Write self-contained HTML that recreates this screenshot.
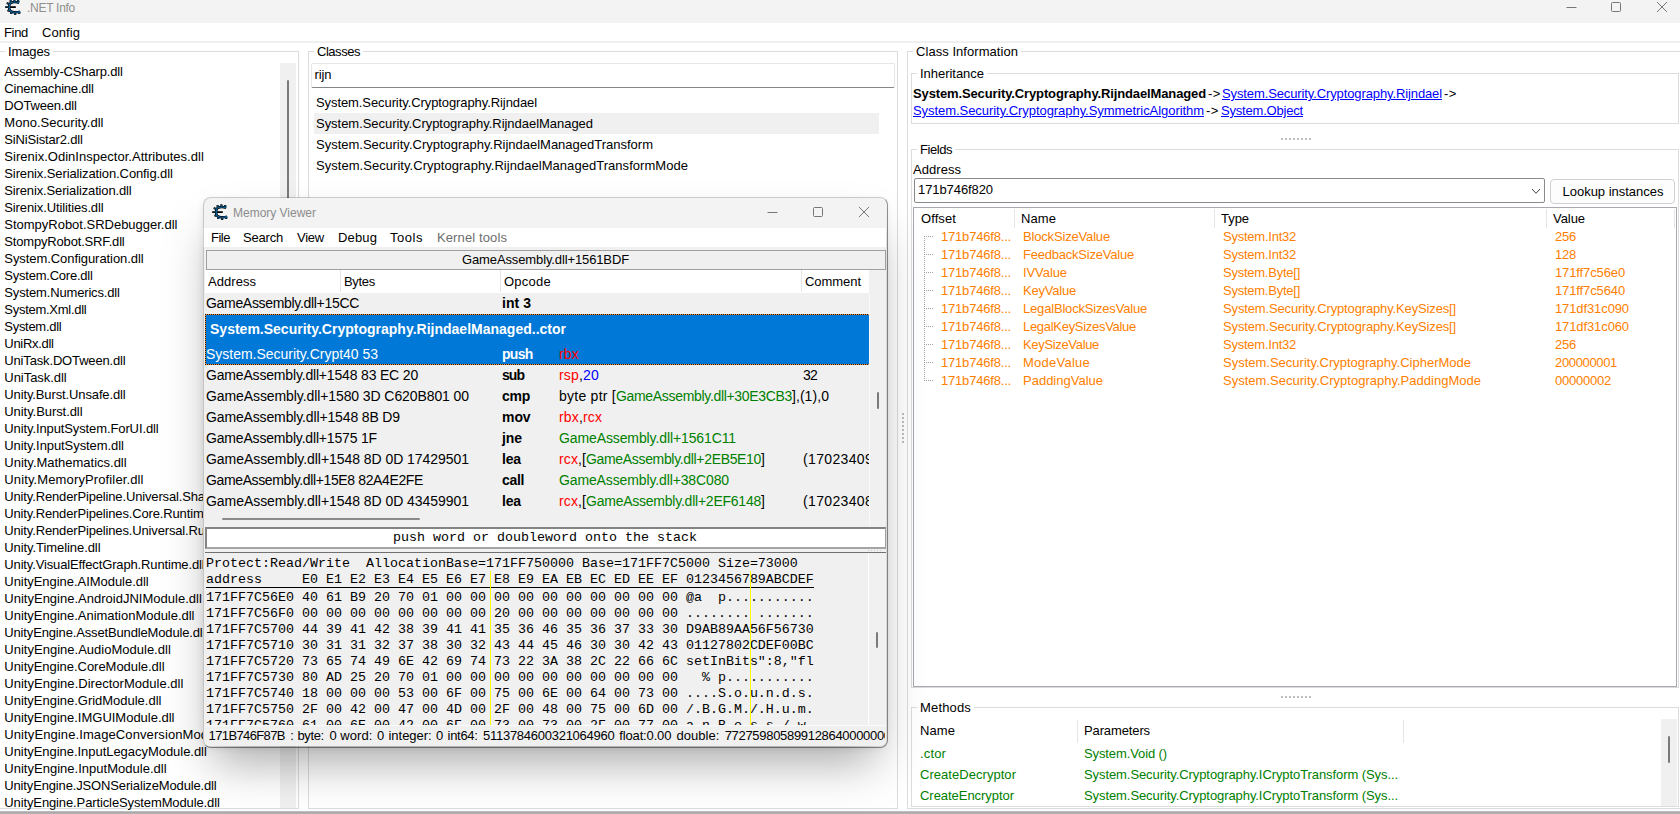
<!DOCTYPE html><html><head><meta charset="utf-8"><title>.NET Info</title><style>
html,body{margin:0;padding:0;background:#fff;}
body{width:1680px;height:814px;overflow:hidden;position:relative;font-family:"Liberation Sans", sans-serif;}
#main,#mv{position:absolute;}
#main{left:0;top:0;width:1680px;height:814px;overflow:hidden;}
#main>*,#mv>*,#mv>div>*{position:absolute;}
.t{white-space:pre;display:block;}
#mv{left:203px;top:198px;width:683px;height:548px;border-radius:8px 8px 6px 6px;overflow:hidden;background:#f0f0f0;}
#mvring{position:absolute;left:203px;top:197px;width:684.5px;height:551px;border-radius:8px;box-sizing:border-box;border:1px solid;border-color:rgba(0,0,0,.18) rgba(0,0,0,.42) rgba(0,0,0,.42) rgba(0,0,0,.18);}
#mvsh{position:absolute;left:203px;top:198px;width:683px;height:548px;border-radius:8px;box-shadow:0 26px 44px -10px rgba(0,0,0,.34),0 2px 7px rgba(0,0,0,.09);}
</style></head><body><div id="main"><div style="left:0px;top:0px;width:1680px;height:23px;background:#f3f3f3"></div><span class="t" style="letter-spacing:-0.274px;left:27px;top:-1.0px;line-height:18px;font-size:12px;color:#8f8f8f;">.NET Info</span><svg style="left:1560px;top:0" width="120" height="22" viewBox="0 0 120 22"><g fill="none" stroke="#777" stroke-width="1"><path d="M6.5 7.5h10"/><rect x="51.5" y="2.5" width="9" height="9" rx="1"/><path d="M97 2l10 10M107 2l-10 10"/></g></svg><span class="t" style="letter-spacing:-0.324px;left:4px;top:23.0px;line-height:19px;font-size:13px;color:#000;">Find</span><span class="t" style="letter-spacing:0.070px;left:42px;top:23.0px;line-height:19px;font-size:13px;color:#000;">Config</span><div style="left:0px;top:41px;width:1680px;height:2px;background:#f0f0f0"></div><div style="left:0px;top:51px;width:299px;height:758px;border:1px solid #dcdcdc;border-left:none;box-sizing:border-box"></div><span class="t" style="letter-spacing:-0.107px;left:5px;top:45.0px;line-height:13px;font-size:13px;color:#000;background:#fff;padding:0 3px;">Images</span><div style="left:280px;top:63px;width:16px;height:745px;background:#f0f0f0"></div><div style="left:287px;top:80px;width:2px;height:130px;background:#7a7a7a;border-radius:1px"></div><span class="t" style="letter-spacing:-0.151px;left:4.3px;top:61.5px;line-height:19px;font-size:13px;color:#000;">Assembly-CSharp.dll</span><span class="t" style="letter-spacing:-0.207px;left:4.3px;top:78.5px;line-height:19px;font-size:13px;color:#000;">Cinemachine.dll</span><span class="t" style="letter-spacing:-0.184px;left:4.3px;top:95.5px;line-height:19px;font-size:13px;color:#000;">DOTween.dll</span><span class="t" style="letter-spacing:0.026px;left:4.3px;top:112.5px;line-height:19px;font-size:13px;color:#000;">Mono.Security.dll</span><span class="t" style="letter-spacing:-0.168px;left:4.3px;top:129.5px;line-height:19px;font-size:13px;color:#000;">SiNiSistar2.dll</span><span class="t" style="letter-spacing:0.022px;left:4.3px;top:146.5px;line-height:19px;font-size:13px;color:#000;">Sirenix.OdinInspector.Attributes.dll</span><span class="t" style="letter-spacing:-0.112px;left:4.3px;top:163.5px;line-height:19px;font-size:13px;color:#000;">Sirenix.Serialization.Config.dll</span><span class="t" style="letter-spacing:-0.139px;left:4.3px;top:180.5px;line-height:19px;font-size:13px;color:#000;">Sirenix.Serialization.dll</span><span class="t" style="letter-spacing:-0.127px;left:4.3px;top:197.5px;line-height:19px;font-size:13px;color:#000;">Sirenix.Utilities.dll</span><span class="t" style="letter-spacing:-0.013px;left:4.3px;top:214.5px;line-height:19px;font-size:13px;color:#000;">StompyRobot.SRDebugger.dll</span><span class="t" style="letter-spacing:-0.172px;left:4.3px;top:231.5px;line-height:19px;font-size:13px;color:#000;">StompyRobot.SRF.dll</span><span class="t" style="letter-spacing:-0.067px;left:4.3px;top:248.5px;line-height:19px;font-size:13px;color:#000;">System.Configuration.dll</span><span class="t" style="letter-spacing:-0.223px;left:4.3px;top:265.5px;line-height:19px;font-size:13px;color:#000;">System.Core.dll</span><span class="t" style="letter-spacing:-0.156px;left:4.3px;top:282.5px;line-height:19px;font-size:13px;color:#000;">System.Numerics.dll</span><span class="t" style="letter-spacing:-0.269px;left:4.3px;top:299.5px;line-height:19px;font-size:13px;color:#000;">System.Xml.dll</span><span class="t" style="letter-spacing:-0.287px;left:4.3px;top:316.5px;line-height:19px;font-size:13px;color:#000;">System.dll</span><span class="t" style="letter-spacing:-0.302px;left:4.3px;top:333.5px;line-height:19px;font-size:13px;color:#000;">UniRx.dll</span><span class="t" style="letter-spacing:-0.157px;left:4.3px;top:350.5px;line-height:19px;font-size:13px;color:#000;">UniTask.DOTween.dll</span><span class="t" style="letter-spacing:-0.042px;left:4.3px;top:367.5px;line-height:19px;font-size:13px;color:#000;">UniTask.dll</span><span class="t" style="letter-spacing:-0.124px;left:4.3px;top:384.5px;line-height:19px;font-size:13px;color:#000;">Unity.Burst.Unsafe.dll</span><span class="t" style="letter-spacing:-0.069px;left:4.3px;top:401.5px;line-height:19px;font-size:13px;color:#000;">Unity.Burst.dll</span><span class="t" style="letter-spacing:-0.110px;left:4.3px;top:418.5px;line-height:19px;font-size:13px;color:#000;">Unity.InputSystem.ForUI.dll</span><span class="t" style="letter-spacing:-0.078px;left:4.3px;top:435.5px;line-height:19px;font-size:13px;color:#000;">Unity.InputSystem.dll</span><span class="t" style="letter-spacing:-0.013px;left:4.3px;top:452.5px;line-height:19px;font-size:13px;color:#000;">Unity.Mathematics.dll</span><span class="t" style="letter-spacing:0.125px;left:4.3px;top:469.5px;line-height:19px;font-size:13px;color:#000;">Unity.MemoryProfiler.dll</span><span class="t" style="left:4.3px;top:486.5px;line-height:19px;font-size:13px;color:#000;letter-spacing:-0.15px;">Unity.RenderPipeline.Universal.ShaderLibrary.dll</span><span class="t" style="left:4.3px;top:503.5px;line-height:19px;font-size:13px;color:#000;letter-spacing:-0.15px;">Unity.RenderPipelines.Core.Runtime.dll</span><span class="t" style="left:4.3px;top:520.5px;line-height:19px;font-size:13px;color:#000;letter-spacing:-0.15px;">Unity.RenderPipelines.Universal.Runtime.dll</span><span class="t" style="letter-spacing:-0.074px;left:4.3px;top:537.5px;line-height:19px;font-size:13px;color:#000;">Unity.Timeline.dll</span><span class="t" style="letter-spacing:-0.143px;left:4.3px;top:554.5px;line-height:19px;font-size:13px;color:#000;">Unity.VisualEffectGraph.Runtime.dll</span><span class="t" style="letter-spacing:-0.040px;left:4.3px;top:571.5px;line-height:19px;font-size:13px;color:#000;">UnityEngine.AIModule.dll</span><span class="t" style="letter-spacing:0.007px;left:4.3px;top:588.5px;line-height:19px;font-size:13px;color:#000;">UnityEngine.AndroidJNIModule.dll</span><span class="t" style="letter-spacing:-0.019px;left:4.3px;top:605.5px;line-height:19px;font-size:13px;color:#000;">UnityEngine.AnimationModule.dll</span><span class="t" style="left:4.3px;top:622.5px;line-height:19px;font-size:13px;color:#000;letter-spacing:-0.15px;">UnityEngine.AssetBundleModule.dll</span><span class="t" style="letter-spacing:0.010px;left:4.3px;top:639.5px;line-height:19px;font-size:13px;color:#000;">UnityEngine.AudioModule.dll</span><span class="t" style="letter-spacing:-0.037px;left:4.3px;top:656.5px;line-height:19px;font-size:13px;color:#000;">UnityEngine.CoreModule.dll</span><span class="t" style="letter-spacing:0.021px;left:4.3px;top:673.5px;line-height:19px;font-size:13px;color:#000;">UnityEngine.DirectorModule.dll</span><span class="t" style="letter-spacing:-0.017px;left:4.3px;top:690.5px;line-height:19px;font-size:13px;color:#000;">UnityEngine.GridModule.dll</span><span class="t" style="letter-spacing:-0.012px;left:4.3px;top:707.5px;line-height:19px;font-size:13px;color:#000;">UnityEngine.IMGUIModule.dll</span><span class="t" style="left:4.3px;top:724.5px;line-height:19px;font-size:13px;color:#000;letter-spacing:0.1px;">UnityEngine.ImageConversionModule.dll</span><span class="t" style="letter-spacing:-0.040px;left:4.3px;top:741.5px;line-height:19px;font-size:13px;color:#000;">UnityEngine.InputLegacyModule.dll</span><span class="t" style="letter-spacing:0.015px;left:4.3px;top:758.5px;line-height:19px;font-size:13px;color:#000;">UnityEngine.InputModule.dll</span><span class="t" style="letter-spacing:-0.149px;left:4.3px;top:775.5px;line-height:19px;font-size:13px;color:#000;">UnityEngine.JSONSerializeModule.dll</span><span class="t" style="letter-spacing:-0.118px;left:4.3px;top:792.5px;line-height:19px;font-size:13px;color:#000;">UnityEngine.ParticleSystemModule.dll</span><div style="left:308px;top:51px;width:590px;height:758px;border:1px solid #dcdcdc;box-sizing:border-box"></div><span class="t" style="letter-spacing:-0.464px;left:314px;top:45.0px;line-height:13px;font-size:13px;color:#000;background:#fff;padding:0 3px;">Classes</span><div style="left:311px;top:63px;width:584px;height:25px;border:1px solid #e6e6e6;border-bottom:1px solid #868686;box-sizing:border-box;background:#fff;border-radius:2px"></div><span class="t" style="letter-spacing:-0.086px;left:314.5px;top:65.0px;line-height:19px;font-size:13px;color:#000;">rijn</span><div style="left:314px;top:113px;width:565px;height:21px;background:#f0f0f0"></div><span class="t" style="letter-spacing:-0.087px;left:316px;top:93.0px;line-height:19px;font-size:13px;color:#000;">System.Security.Cryptography.Rijndael</span><span class="t" style="letter-spacing:-0.033px;left:316px;top:114.0px;line-height:19px;font-size:13px;color:#000;">System.Security.Cryptography.RijndaelManaged</span><span class="t" style="letter-spacing:-0.004px;left:316px;top:135.0px;line-height:19px;font-size:13px;color:#000;">System.Security.Cryptography.RijndaelManagedTransform</span><span class="t" style="letter-spacing:0.040px;left:316px;top:156.0px;line-height:19px;font-size:13px;color:#000;">System.Security.Cryptography.RijndaelManagedTransformMode</span><div style="left:902px;top:413px;width:2px;height:31px;background:repeating-linear-gradient(#bdbdbd 0 2px,transparent 2px 4px)"></div><div style="left:907px;top:51px;width:1780px;height:758px;border:1px solid #dcdcdc;box-sizing:border-box"></div><span class="t" style="letter-spacing:0.050px;left:913px;top:45.0px;line-height:13px;font-size:13px;color:#000;background:#fff;padding:0 3px;">Class Information</span><div style="left:911px;top:73px;width:768px;height:51px;border:1px solid #dcdcdc;box-sizing:border-box"></div><span class="t" style="letter-spacing:-0.030px;left:917px;top:67.0px;line-height:13px;font-size:13px;color:#000;background:#fff;padding:0 3px;">Inheritance</span><span class="t" style="letter-spacing:-0.127px;left:913px;top:84.0px;line-height:19px;font-size:13px;color:#000;font-weight:700;">System.Security.Cryptography.RijndaelManaged</span><span class="t" style="letter-spacing:0.539px;left:1208px;top:84.0px;line-height:19px;font-size:13px;color:#000;">-&gt;</span><span class="t" style="letter-spacing:-0.114px;left:1222px;top:84.0px;line-height:19px;font-size:13px;color:#0000ff;text-decoration:underline;">System.Security.Cryptography.Rijndael</span><span class="t" style="letter-spacing:0.539px;left:1444px;top:84.0px;line-height:19px;font-size:13px;color:#000;">-&gt;</span><span class="t" style="letter-spacing:-0.054px;left:913px;top:101.0px;line-height:19px;font-size:13px;color:#0000ff;text-decoration:underline;">System.Security.Cryptography.SymmetricAlgorithm</span><span class="t" style="letter-spacing:0.539px;left:1206px;top:101.0px;line-height:19px;font-size:13px;color:#000;">-&gt;</span><span class="t" style="letter-spacing:-0.195px;left:1221px;top:101.0px;line-height:19px;font-size:13px;color:#0000ff;text-decoration:underline;">System.Object</span><div style="left:1281px;top:138px;width:30px;height:2px;background:repeating-linear-gradient(90deg,#bdbdbd 0 2px,transparent 2px 4px)"></div><div style="left:911px;top:149px;width:768px;height:539px;border:1px solid #dcdcdc;box-sizing:border-box"></div><span class="t" style="letter-spacing:-0.448px;left:917px;top:143.0px;line-height:13px;font-size:13px;color:#000;background:#fff;padding:0 3px;">Fields</span><span class="t" style="letter-spacing:0.042px;left:913px;top:160.0px;line-height:19px;font-size:13px;color:#000;">Address</span><div style="left:914px;top:178px;width:631px;height:25px;border:1px solid #8a8a8a;box-sizing:border-box;background:#fff;border-radius:2px"></div><span class="t" style="letter-spacing:-0.084px;left:918px;top:180.0px;line-height:19px;font-size:13px;color:#000;">171b746f820</span><svg style="left:1530px;top:185.5px" width="12" height="10" viewBox="0 0 12 10"><path d="M2 3l4 4.3 4-4.3" fill="none" stroke="#444" stroke-width="1"/></svg><div style="left:1550px;top:179px;width:125px;height:25px;border:1px solid #d0d0d0;box-sizing:border-box;background:#fdfdfd;border-radius:4px"></div><span class="t" style="letter-spacing:-0.012px;left:1562.5px;top:182.0px;line-height:19px;font-size:13px;color:#000;">Lookup instances</span><div style="left:913px;top:207px;width:764px;height:480px;border:1px solid #a6a9b0;box-sizing:border-box;background:#fff"></div><div style="left:1014px;top:209px;width:1px;height:19px;background:#e5e5e5"></div><div style="left:1214px;top:209px;width:1px;height:19px;background:#e5e5e5"></div><div style="left:1546px;top:209px;width:1px;height:19px;background:#e5e5e5"></div><div style="left:1674px;top:209px;width:1px;height:19px;background:#e5e5e5"></div><span class="t" style="letter-spacing:0.091px;left:921px;top:209.0px;line-height:19px;font-size:13px;color:#000;">Offset</span><span class="t" style="letter-spacing:0.078px;left:1021px;top:209.0px;line-height:19px;font-size:13px;color:#000;">Name</span><span class="t" style="letter-spacing:-0.047px;left:1221px;top:209.0px;line-height:19px;font-size:13px;color:#000;">Type</span><span class="t" style="letter-spacing:-0.059px;left:1553px;top:209.0px;line-height:19px;font-size:13px;color:#000;">Value</span><span class="t" style="letter-spacing:-0.191px;left:941px;top:227.0px;line-height:19px;font-size:13px;color:#ff8000;">171b746f8...</span><span class="t" style="letter-spacing:-0.170px;left:1023px;top:227.0px;line-height:19px;font-size:13px;color:#ff8000;">BlockSizeValue</span><span class="t" style="letter-spacing:-0.240px;left:1223px;top:227.0px;line-height:19px;font-size:13px;color:#ff8000;">System.Int32</span><span class="t" style="letter-spacing:-0.234px;left:1555px;top:227.0px;line-height:19px;font-size:13px;color:#ff8000;">256</span><div style="left:924px;top:236px;width:10px;height:1px;background:repeating-linear-gradient(90deg,#a0a0a0 0 1px,transparent 1px 2px)"></div><span class="t" style="letter-spacing:-0.191px;left:941px;top:245.0px;line-height:19px;font-size:13px;color:#ff8000;">171b746f8...</span><span class="t" style="letter-spacing:-0.216px;left:1023px;top:245.0px;line-height:19px;font-size:13px;color:#ff8000;">FeedbackSizeValue</span><span class="t" style="letter-spacing:-0.240px;left:1223px;top:245.0px;line-height:19px;font-size:13px;color:#ff8000;">System.Int32</span><span class="t" style="letter-spacing:-0.234px;left:1555px;top:245.0px;line-height:19px;font-size:13px;color:#ff8000;">128</span><div style="left:924px;top:254px;width:10px;height:1px;background:repeating-linear-gradient(90deg,#a0a0a0 0 1px,transparent 1px 2px)"></div><span class="t" style="letter-spacing:-0.191px;left:941px;top:263.0px;line-height:19px;font-size:13px;color:#ff8000;">171b746f8...</span><span class="t" style="letter-spacing:-0.083px;left:1023px;top:263.0px;line-height:19px;font-size:13px;color:#ff8000;">IVValue</span><span class="t" style="letter-spacing:-0.246px;left:1223px;top:263.0px;line-height:19px;font-size:13px;color:#ff8000;">System.Byte[]</span><span class="t" style="letter-spacing:-0.122px;left:1555px;top:263.0px;line-height:19px;font-size:13px;color:#ff8000;">171ff7c56e0</span><div style="left:924px;top:272px;width:10px;height:1px;background:repeating-linear-gradient(90deg,#a0a0a0 0 1px,transparent 1px 2px)"></div><span class="t" style="letter-spacing:-0.191px;left:941px;top:281.0px;line-height:19px;font-size:13px;color:#ff8000;">171b746f8...</span><span class="t" style="letter-spacing:-0.211px;left:1023px;top:281.0px;line-height:19px;font-size:13px;color:#ff8000;">KeyValue</span><span class="t" style="letter-spacing:-0.246px;left:1223px;top:281.0px;line-height:19px;font-size:13px;color:#ff8000;">System.Byte[]</span><span class="t" style="letter-spacing:-0.122px;left:1555px;top:281.0px;line-height:19px;font-size:13px;color:#ff8000;">171ff7c5640</span><div style="left:924px;top:290px;width:10px;height:1px;background:repeating-linear-gradient(90deg,#a0a0a0 0 1px,transparent 1px 2px)"></div><span class="t" style="letter-spacing:-0.191px;left:941px;top:299.0px;line-height:19px;font-size:13px;color:#ff8000;">171b746f8...</span><span class="t" style="letter-spacing:-0.184px;left:1023px;top:299.0px;line-height:19px;font-size:13px;color:#ff8000;">LegalBlockSizesValue</span><span class="t" style="letter-spacing:-0.145px;left:1223px;top:299.0px;line-height:19px;font-size:13px;color:#ff8000;">System.Security.Cryptography.KeySizes[]</span><span class="t" style="letter-spacing:-0.108px;left:1555px;top:299.0px;line-height:19px;font-size:13px;color:#ff8000;">171df31c090</span><div style="left:924px;top:308px;width:10px;height:1px;background:repeating-linear-gradient(90deg,#a0a0a0 0 1px,transparent 1px 2px)"></div><span class="t" style="letter-spacing:-0.191px;left:941px;top:317.0px;line-height:19px;font-size:13px;color:#ff8000;">171b746f8...</span><span class="t" style="letter-spacing:-0.294px;left:1023px;top:317.0px;line-height:19px;font-size:13px;color:#ff8000;">LegalKeySizesValue</span><span class="t" style="letter-spacing:-0.145px;left:1223px;top:317.0px;line-height:19px;font-size:13px;color:#ff8000;">System.Security.Cryptography.KeySizes[]</span><span class="t" style="letter-spacing:-0.108px;left:1555px;top:317.0px;line-height:19px;font-size:13px;color:#ff8000;">171df31c060</span><div style="left:924px;top:326px;width:10px;height:1px;background:repeating-linear-gradient(90deg,#a0a0a0 0 1px,transparent 1px 2px)"></div><span class="t" style="letter-spacing:-0.191px;left:941px;top:335.0px;line-height:19px;font-size:13px;color:#ff8000;">171b746f8...</span><span class="t" style="letter-spacing:-0.332px;left:1023px;top:335.0px;line-height:19px;font-size:13px;color:#ff8000;">KeySizeValue</span><span class="t" style="letter-spacing:-0.240px;left:1223px;top:335.0px;line-height:19px;font-size:13px;color:#ff8000;">System.Int32</span><span class="t" style="letter-spacing:-0.234px;left:1555px;top:335.0px;line-height:19px;font-size:13px;color:#ff8000;">256</span><div style="left:924px;top:344px;width:10px;height:1px;background:repeating-linear-gradient(90deg,#a0a0a0 0 1px,transparent 1px 2px)"></div><span class="t" style="letter-spacing:-0.191px;left:941px;top:353.0px;line-height:19px;font-size:13px;color:#ff8000;">171b746f8...</span><span class="t" style="letter-spacing:0.243px;left:1023px;top:353.0px;line-height:19px;font-size:13px;color:#ff8000;">ModeValue</span><span class="t" style="letter-spacing:-0.002px;left:1223px;top:353.0px;line-height:19px;font-size:13px;color:#ff8000;">System.Security.Cryptography.CipherMode</span><span class="t" style="letter-spacing:-0.342px;left:1555px;top:353.0px;line-height:19px;font-size:13px;color:#ff8000;">200000001</span><div style="left:924px;top:362px;width:10px;height:1px;background:repeating-linear-gradient(90deg,#a0a0a0 0 1px,transparent 1px 2px)"></div><span class="t" style="letter-spacing:-0.191px;left:941px;top:371.0px;line-height:19px;font-size:13px;color:#ff8000;">171b746f8...</span><span class="t" style="letter-spacing:0.000px;left:1023px;top:371.0px;line-height:19px;font-size:13px;color:#ff8000;">PaddingValue</span><span class="t" style="letter-spacing:0.013px;left:1223px;top:371.0px;line-height:19px;font-size:13px;color:#ff8000;">System.Security.Cryptography.PaddingMode</span><span class="t" style="letter-spacing:-0.230px;left:1555px;top:371.0px;line-height:19px;font-size:13px;color:#ff8000;">00000002</span><div style="left:924px;top:380px;width:10px;height:1px;background:repeating-linear-gradient(90deg,#a0a0a0 0 1px,transparent 1px 2px)"></div><div style="left:924px;top:236px;width:1px;height:145px;background:repeating-linear-gradient(#a0a0a0 0 1px,transparent 1px 2px)"></div><div style="left:1281px;top:696px;width:30px;height:2px;background:repeating-linear-gradient(90deg,#bdbdbd 0 2px,transparent 2px 4px)"></div><div style="left:911px;top:707px;width:768px;height:100px;border:1px solid #dcdcdc;box-sizing:border-box"></div><span class="t" style="letter-spacing:0.161px;left:917px;top:701.0px;line-height:13px;font-size:13px;color:#000;background:#fff;padding:0 3px;">Methods</span><div style="left:1661px;top:719px;width:16px;height:87px;background:#f0f0f0"></div><div style="left:1668px;top:736px;width:2px;height:27px;background:#7a7a7a;border-radius:1px"></div><div style="left:1077px;top:720px;width:1px;height:23px;background:#e5e5e5"></div><div style="left:1403px;top:720px;width:1px;height:23px;background:#e5e5e5"></div><span class="t" style="letter-spacing:0.078px;left:920px;top:721.0px;line-height:19px;font-size:13px;color:#000;">Name</span><span class="t" style="letter-spacing:-0.120px;left:1084px;top:721.0px;line-height:19px;font-size:13px;color:#000;">Parameters</span><span class="t" style="letter-spacing:0.141px;left:920px;top:744.0px;line-height:19px;font-size:13px;color:#008000;">.ctor</span><span class="t" style="letter-spacing:-0.109px;left:1084px;top:744.0px;line-height:19px;font-size:13px;color:#008000;">System.Void ()</span><span class="t" style="letter-spacing:0.042px;left:920px;top:765.0px;line-height:19px;font-size:13px;color:#008000;">CreateDecryptor</span><span class="t" style="letter-spacing:-0.082px;left:1084px;top:765.0px;line-height:19px;font-size:13px;color:#008000;">System.Security.Cryptography.ICryptoTransform (Sys...</span><span class="t" style="letter-spacing:-0.044px;left:920px;top:786.0px;line-height:19px;font-size:13px;color:#008000;">CreateEncryptor</span><span class="t" style="letter-spacing:-0.082px;left:1084px;top:786.0px;line-height:19px;font-size:13px;color:#008000;">System.Security.Cryptography.ICryptoTransform (Sys...</span><div style="left:0px;top:811px;width:1680px;height:3px;background:linear-gradient(#d0d0d0,#a8a8a8 35%,#b4b4b4)"></div><svg style="left:5px;top:-1px" width="17" height="17" viewBox="0 0 17 17"><g fill="none"><path d="M14.2 3.7Q10.5 2.5 7.6 3.2Q4.3 4 4.3 6.6V9.7Q4.3 12.2 7.6 13Q11 13.8 15.2 12.6" stroke="#000" stroke-width="2.5"/><path d="M5.6 3.4V0.9M9.4 3.2V0.2M13.2 3.2V0.9M6.2 13V15.1M10.2 13V15.9M14.2 13V15.1M4.6 5.2L1.7 4.1M4.8 11L2.5 12" stroke="#000" stroke-width="2.1"/><path d="M0.2 8.1H10.8" stroke="#000" stroke-width="1.8"/><path d="M14.2 3.7Q10.5 2.5 7.6 3.2Q4.3 4 4.3 6.6V9.7Q4.3 12.2 7.6 13Q11 13.8 15.2 12.6" stroke="#0b68a6" stroke-width="1.1"/><path d="M5.6 3.4V0.9M9.4 3.2V0.2M13.2 3.2V0.9M6.2 13V15.1M10.2 13V15.9M14.2 13V15.1M4.6 5.2L1.7 4.1M4.8 11L2.5 12" stroke="#0b68a6" stroke-width="0.7"/><path d="M1.5 8.1H5.5" stroke="#0b68a6" stroke-width="0.6"/></g></svg></div><div id="mvsh"></div><div id="mv"><div style="left:0px;top:0px;width:683px;height:30px;background:#f3f3f3"></div><span class="t" style="letter-spacing:-0.011px;left:30px;top:5.5px;line-height:18px;font-size:12px;color:#8c8c8c;">Memory Viewer</span><svg style="left:557px;top:6px" width="120" height="18" viewBox="0 0 120 18"><g fill="none" stroke="#777" stroke-width="1"><path d="M7.5 8.5h10"/><rect x="53.5" y="3.5" width="9" height="9" rx="1"/><path d="M99 3l10 10M109 3l-10 10"/></g></svg><div style="left:0px;top:30px;width:683px;height:19px;background:#fff"></div><span class="t" style="letter-spacing:-0.488px;left:8px;top:30.0px;line-height:19px;font-size:13px;color:#000;">File</span><span class="t" style="letter-spacing:-0.201px;left:40px;top:30.0px;line-height:19px;font-size:13px;color:#000;">Search</span><span class="t" style="letter-spacing:-0.238px;left:94px;top:30.0px;line-height:19px;font-size:13px;color:#000;">View</span><span class="t" style="letter-spacing:0.138px;left:135px;top:30.0px;line-height:19px;font-size:13px;color:#000;">Debug</span><span class="t" style="letter-spacing:0.528px;left:187px;top:30.0px;line-height:19px;font-size:13px;color:#000;">Tools</span><span class="t" style="letter-spacing:0.112px;left:234px;top:30.0px;line-height:19px;font-size:13px;color:#6d6d6d;">Kernel tools</span><div style="left:0px;top:49px;width:683px;height:499px;background:#f0f0f0"></div><div style="left:3px;top:52px;width:680px;height:20px;border:1px solid #a0a0a0;box-sizing:border-box;background:#f0f0f0"></div><span class="t" style="letter-spacing:-0.122px;left:259px;top:52.0px;line-height:19px;font-size:13px;color:#000;">GameAssembly.dll+1561BDF</span><div style="left:2px;top:72px;width:664px;height:23px;background:#fff"></div><div style="left:137px;top:72px;width:1px;height:22px;background:#e5e5e5"></div><div style="left:297px;top:72px;width:1px;height:22px;background:#e5e5e5"></div><div style="left:598px;top:72px;width:1px;height:22px;background:#e5e5e5"></div><span class="t" style="letter-spacing:0.042px;left:5px;top:74.0px;line-height:19px;font-size:13px;color:#000;">Address</span><span class="t" style="letter-spacing:-0.303px;left:141px;top:74.0px;line-height:19px;font-size:13px;color:#000;">Bytes</span><span class="t" style="letter-spacing:0.242px;left:301px;top:74.0px;line-height:19px;font-size:13px;color:#000;">Opcode</span><span class="t" style="letter-spacing:-0.051px;left:602px;top:74.0px;line-height:19px;font-size:13px;color:#000;">Comment</span><span class="t" style="letter-spacing:-0.316px;left:3px;top:94.89999999999998px;line-height:20px;font-size:14px;color:#000;">GameAssembly.dll+15CC</span><span class="t" style="letter-spacing:0.044px;left:299px;top:94.89999999999998px;line-height:20px;font-size:14px;color:#000;font-weight:700;">int 3</span><div style="left:2px;top:116px;width:664px;height:51px;background:#0078d7"></div><div style="left:2px;top:116px;width:664px;height:1px;background:repeating-linear-gradient(90deg,#1a1a1a 0 1px,#ff8a28 1px 2px)"></div><div style="left:2px;top:166px;width:664px;height:1px;background:repeating-linear-gradient(90deg,#1a1a1a 0 1px,#ff8a28 1px 2px)"></div><div style="left:2px;top:116px;width:1px;height:51px;background:repeating-linear-gradient(#1a1a1a 0 1px,#ff8a28 1px 2px)"></div><span class="t" style="letter-spacing:0.004px;left:7px;top:120.5px;line-height:20px;font-size:14px;color:#fff;font-weight:700;">System.Security.Cryptography.RijndaelManaged..ctor</span><span class="t" style="letter-spacing:-0.019px;left:3px;top:145.89999999999998px;line-height:20px;font-size:14px;color:#fff;">System.Security.Crypt40 53</span><span class="t" style="letter-spacing:-0.738px;left:299px;top:145.89999999999998px;line-height:20px;font-size:14px;color:#fff;font-weight:700;">push</span><span class="t" style="letter-spacing:0.182px;left:356px;top:145.89999999999998px;line-height:20px;font-size:14px;color:#ff0000;">rbx</span><span class="t" style="letter-spacing:-0.175px;left:3px;top:166.89999999999998px;line-height:20px;font-size:14px;color:#000;">GameAssembly.dll+1548 83 EC 20</span><span class="t" style="letter-spacing:-0.964px;left:299px;top:166.89999999999998px;line-height:20px;font-size:14px;color:#000;font-weight:700;">sub</span><span class="t" style="letter-spacing:0.182px;left:356px;top:166.89999999999998px;line-height:20px;font-size:14px;color:#ff0000;">rsp</span><span class="t" style="letter-spacing:0.109px;left:376px;top:166.89999999999998px;line-height:20px;font-size:14px;color:#000;">,</span><span class="t" style="letter-spacing:0.211px;left:380px;top:166.89999999999998px;line-height:20px;font-size:14px;color:#0000ff;">20</span><span class="t" style="letter-spacing:-0.789px;left:600px;top:166.89999999999998px;line-height:20px;font-size:14px;color:#000;">32</span><span class="t" style="letter-spacing:-0.092px;left:3px;top:187.89999999999998px;line-height:20px;font-size:14px;color:#000;">GameAssembly.dll+1580 3D C620B801 00</span><span class="t" style="letter-spacing:-0.266px;left:299px;top:187.89999999999998px;line-height:20px;font-size:14px;color:#000;font-weight:700;">cmp</span><span class="t" style="letter-spacing:0.253px;left:356px;top:187.89999999999998px;line-height:20px;font-size:14px;color:#000;">byte ptr [</span><span class="t" style="letter-spacing:-0.324px;left:413px;top:187.89999999999998px;line-height:20px;font-size:14px;color:#008000;">GameAssembly.dll+30E3CB3</span><span class="t" style="letter-spacing:0.060px;left:589px;top:187.89999999999998px;line-height:20px;font-size:14px;color:#000;">],(1),0</span><span class="t" style="letter-spacing:-0.141px;left:3px;top:208.89999999999998px;line-height:20px;font-size:14px;color:#000;">GameAssembly.dll+1548 8B D9</span><span class="t" style="letter-spacing:-0.066px;left:299px;top:208.89999999999998px;line-height:20px;font-size:14px;color:#000;font-weight:700;">mov</span><span class="t" style="letter-spacing:0.182px;left:356px;top:208.89999999999998px;line-height:20px;font-size:14px;color:#ff0000;">rbx</span><span class="t" style="letter-spacing:0.109px;left:376px;top:208.89999999999998px;line-height:20px;font-size:14px;color:#000;">,</span><span class="t" style="letter-spacing:0.109px;left:380px;top:208.89999999999998px;line-height:20px;font-size:14px;color:#ff0000;">rcx</span><span class="t" style="letter-spacing:-0.176px;left:3px;top:229.89999999999998px;line-height:20px;font-size:14px;color:#000;">GameAssembly.dll+1575 1F</span><span class="t" style="letter-spacing:-0.078px;left:299px;top:229.89999999999998px;line-height:20px;font-size:14px;color:#000;font-weight:700;">jne</span><span class="t" style="letter-spacing:-0.110px;left:356px;top:229.89999999999998px;line-height:20px;font-size:14px;color:#008000;">GameAssembly.dll+1561C11</span><span class="t" style="letter-spacing:-0.049px;left:3px;top:250.89999999999998px;line-height:20px;font-size:14px;color:#000;">GameAssembly.dll+1548 8D 0D 17429501</span><span class="t" style="letter-spacing:-0.156px;left:299px;top:250.89999999999998px;line-height:20px;font-size:14px;color:#000;font-weight:700;">lea</span><span class="t" style="letter-spacing:0.109px;left:356px;top:250.89999999999998px;line-height:20px;font-size:14px;color:#ff0000;">rcx</span><span class="t" style="letter-spacing:0.109px;left:375px;top:250.89999999999998px;line-height:20px;font-size:14px;color:#000;">,[</span><span class="t" style="letter-spacing:-0.333px;left:383px;top:250.89999999999998px;line-height:20px;font-size:14px;color:#008000;">GameAssembly.dll+2EB5E10</span><span class="t" style="letter-spacing:1.109px;left:558px;top:250.89999999999998px;line-height:20px;font-size:14px;color:#000;">]</span><span class="t" style="letter-spacing:0.339px;left:600px;top:250.89999999999998px;line-height:20px;font-size:14px;color:#000;">(17023409</span><span class="t" style="letter-spacing:-0.371px;left:3px;top:271.9px;line-height:20px;font-size:14px;color:#000;">GameAssembly.dll+15E8 82A4E2FE</span><span class="t" style="letter-spacing:-0.340px;left:299px;top:271.9px;line-height:20px;font-size:14px;color:#000;font-weight:700;">call</span><span class="t" style="letter-spacing:-0.126px;left:356px;top:271.9px;line-height:20px;font-size:14px;color:#008000;">GameAssembly.dll+38C080</span><span class="t" style="letter-spacing:-0.049px;left:3px;top:292.9px;line-height:20px;font-size:14px;color:#000;">GameAssembly.dll+1548 8D 0D 43459901</span><span class="t" style="letter-spacing:-0.156px;left:299px;top:292.9px;line-height:20px;font-size:14px;color:#000;font-weight:700;">lea</span><span class="t" style="letter-spacing:0.109px;left:356px;top:292.9px;line-height:20px;font-size:14px;color:#ff0000;">rcx</span><span class="t" style="letter-spacing:0.109px;left:375px;top:292.9px;line-height:20px;font-size:14px;color:#000;">,[</span><span class="t" style="letter-spacing:-0.236px;left:383px;top:292.9px;line-height:20px;font-size:14px;color:#008000;">GameAssembly.dll+2EF6148</span><span class="t" style="letter-spacing:1.109px;left:558px;top:292.9px;line-height:20px;font-size:14px;color:#000;">]</span><span class="t" style="letter-spacing:0.339px;left:600px;top:292.9px;line-height:20px;font-size:14px;color:#000;">(17023408</span><div style="left:666px;top:72px;width:17px;height:256px;background:#f0f0f0"></div><div style="left:674px;top:194px;width:2px;height:17px;background:#7a7a7a;border-radius:1px"></div><div style="left:666px;top:95px;width:1px;height:233px;background:#fafafa"></div><div style="left:19px;top:320px;width:198px;height:2px;background:#8a8a8a;border-radius:1px"></div><div style="left:2px;top:329px;width:681px;height:22px;border:1px solid #a0a0a0;border-top:2px solid #848484;border-left:2px solid #848484;border-bottom:2px solid #a4a4a4;box-sizing:border-box;background:#fff"></div><span class="t" style="letter-spacing:0.002px;left:190px;top:329.835px;line-height:19.33px;font-size:13.33px;color:#000;font-family:'Liberation Mono', monospace;">push word or doubleword onto the stack</span><div style="left:2px;top:354px;width:681px;height:1px;background:#707070"></div><div style="left:665px;top:352px;width:14px;height:1px;background:repeating-linear-gradient(90deg,#c8c8c8 0 1px,transparent 1px 3px)"></div><div style="left:2px;top:355px;width:663px;height:172px;overflow:hidden;background:#f0f0f0"><span class="t" style="left:1px;top:3.2999999999999545px;line-height:16px;font-size:13.33px;color:#000;font-family:'Liberation Mono', monospace;">Protect:Read/Write  AllocationBase=171FF750000 Base=171FF7C5000 Size=73000</span><span class="t" style="left:1px;top:19.299999999999955px;line-height:16px;font-size:13.33px;color:#000;font-family:'Liberation Mono', monospace;">address     E0 E1 E2 E3 E4 E5 E6 E7 E8 E9 EA EB EC ED EE EF 0123456789ABCDEF</span><span class="t" style="left:1px;top:37.299999999999955px;line-height:16px;font-size:13.33px;color:#000;font-family:'Liberation Mono', monospace;">171FF7C56E0 40 61 B9 20 70 01 00 00 00 00 00 00 00 00 00 00 @a  p...........</span><span class="t" style="left:1px;top:53.299999999999955px;line-height:16px;font-size:13.33px;color:#000;font-family:'Liberation Mono', monospace;">171FF7C56F0 00 00 00 00 00 00 00 00 20 00 00 00 00 00 00 00 ........ .......</span><span class="t" style="left:1px;top:69.29999999999995px;line-height:16px;font-size:13.33px;color:#000;font-family:'Liberation Mono', monospace;">171FF7C5700 44 39 41 42 38 39 41 41 35 36 46 35 36 37 33 30 D9AB89AA56F56730</span><span class="t" style="left:1px;top:85.29999999999995px;line-height:16px;font-size:13.33px;color:#000;font-family:'Liberation Mono', monospace;">171FF7C5710 30 31 31 32 37 38 30 32 43 44 45 46 30 30 42 43 01127802CDEF00BC</span><span class="t" style="left:1px;top:101.29999999999995px;line-height:16px;font-size:13.33px;color:#000;font-family:'Liberation Mono', monospace;">171FF7C5720 73 65 74 49 6E 42 69 74 73 22 3A 38 2C 22 66 6C setInBits":8,"fl</span><span class="t" style="left:1px;top:117.29999999999995px;line-height:16px;font-size:13.33px;color:#000;font-family:'Liberation Mono', monospace;">171FF7C5730 80 AD 25 20 70 01 00 00 00 00 00 00 00 00 00 00   % p...........</span><span class="t" style="left:1px;top:133.29999999999995px;line-height:16px;font-size:13.33px;color:#000;font-family:'Liberation Mono', monospace;">171FF7C5740 18 00 00 00 53 00 6F 00 75 00 6E 00 64 00 73 00 ....S.o.u.n.d.s.</span><span class="t" style="left:1px;top:149.29999999999995px;line-height:16px;font-size:13.33px;color:#000;font-family:'Liberation Mono', monospace;">171FF7C5750 2F 00 42 00 47 00 4D 00 2F 00 48 00 75 00 6D 00 /.B.G.M./.H.u.m.</span><span class="t" style="left:1px;top:165.29999999999995px;line-height:16px;font-size:13.33px;color:#000;font-family:'Liberation Mono', monospace;">171FF7C5760 61 00 6E 00 42 00 6F 00 73 00 73 00 2F 00 77 00 a.n.B.o.s.s./.w.</span><div style="left:1px;top:34px;width:608px;height:1px;background:#000"></div><div style="left:285px;top:18px;width:1px;height:160px;background:#ffff00"></div><div style="left:545px;top:18px;width:1px;height:160px;background:#ffff00"></div></div><div style="left:665px;top:355px;width:18px;height:172px;background:#f0f0f0"></div><div style="left:665px;top:355px;width:1px;height:172px;background:#fff"></div><div style="left:673px;top:434px;width:2px;height:16px;background:#7a7a7a;border-radius:1px"></div><div style="left:2px;top:528px;width:679.5px;height:20px;overflow:hidden"><span class="t" style="letter-spacing:-0.630px;left:3.5999999999999943px;top:0.0px;line-height:19px;font-size:13px;color:#000;">171B746F87B</span><span class="t" style="letter-spacing:-1.125px;left:85.30000000000001px;top:0.0px;line-height:19px;font-size:13px;color:#000;">:</span><span class="t" style="letter-spacing:-0.377px;left:92.5px;top:0.0px;line-height:19px;font-size:13px;color:#000;">byte:</span><span class="t" style="letter-spacing:-1.134px;left:124.39999999999998px;top:0.0px;line-height:19px;font-size:13px;color:#000;">0</span><span class="t" style="letter-spacing:0.101px;left:135.2px;top:0.0px;line-height:19px;font-size:13px;color:#000;">word:</span><span class="t" style="letter-spacing:-0.834px;left:172px;top:0.0px;line-height:19px;font-size:13px;color:#000;">0</span><span class="t" style="letter-spacing:-0.034px;left:183.5px;top:0.0px;line-height:19px;font-size:13px;color:#000;">integer:</span><span class="t" style="letter-spacing:-0.634px;left:231.10000000000002px;top:0.0px;line-height:19px;font-size:13px;color:#000;">0</span><span class="t" style="letter-spacing:-0.302px;left:242.60000000000002px;top:0.0px;line-height:19px;font-size:13px;color:#000;">int64:</span><span class="t" style="letter-spacing:-0.263px;left:278px;top:0.0px;line-height:19px;font-size:13px;color:#000;">5113784600321064960</span><span class="t" style="letter-spacing:-0.150px;left:414.29999999999995px;top:0.0px;line-height:19px;font-size:13px;color:#000;">float:0.00</span><span class="t" style="letter-spacing:0.063px;left:471.4px;top:0.0px;line-height:19px;font-size:13px;color:#000;">double:</span><span class="t" style="letter-spacing:-0.310px;left:519.7px;top:0.0px;line-height:19px;font-size:13px;color:#000;">7727598058991286400000000</span></div><div style="left:2px;top:526.5px;width:681px;height:1px;background:#fbfbfb"></div><svg style="left:9px;top:6px" width="17" height="17" viewBox="0 0 17 17"><g fill="none"><path d="M14.2 3.7Q10.5 2.5 7.6 3.2Q4.3 4 4.3 6.6V9.7Q4.3 12.2 7.6 13Q11 13.8 15.2 12.6" stroke="#000" stroke-width="2.5"/><path d="M5.6 3.4V0.9M9.4 3.2V0.2M13.2 3.2V0.9M6.2 13V15.1M10.2 13V15.9M14.2 13V15.1M4.6 5.2L1.7 4.1M4.8 11L2.5 12" stroke="#000" stroke-width="2.1"/><path d="M0.2 8.1H10.8" stroke="#000" stroke-width="1.8"/><path d="M14.2 3.7Q10.5 2.5 7.6 3.2Q4.3 4 4.3 6.6V9.7Q4.3 12.2 7.6 13Q11 13.8 15.2 12.6" stroke="#0b68a6" stroke-width="1.1"/><path d="M5.6 3.4V0.9M9.4 3.2V0.2M13.2 3.2V0.9M6.2 13V15.1M10.2 13V15.9M14.2 13V15.1M4.6 5.2L1.7 4.1M4.8 11L2.5 12" stroke="#0b68a6" stroke-width="0.7"/><path d="M1.5 8.1H5.5" stroke="#0b68a6" stroke-width="0.6"/></g></svg></div><div id="mvring"></div></body></html>
